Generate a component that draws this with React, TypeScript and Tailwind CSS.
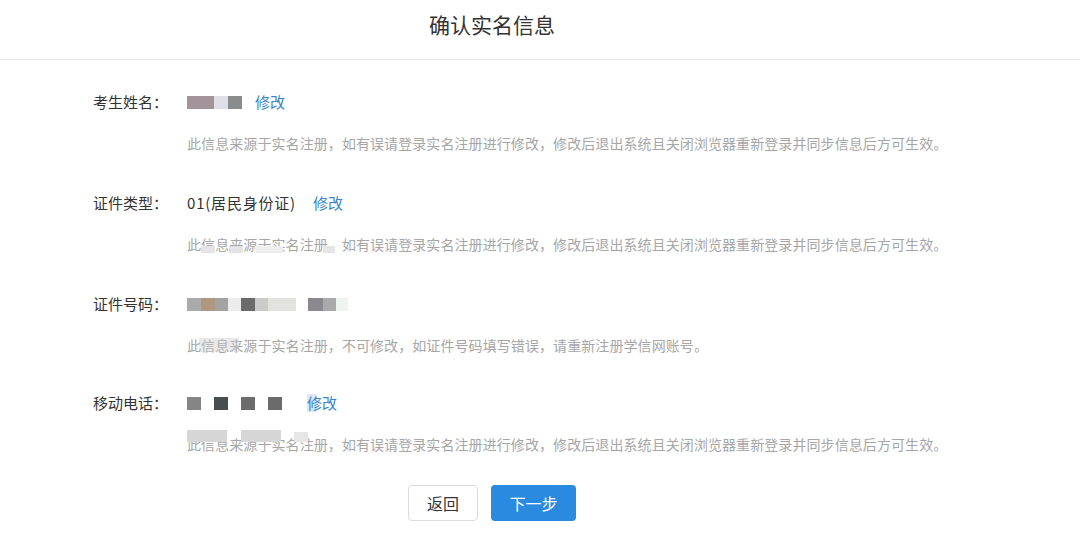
import React from "react";

const font = { fontFamily: '"Noto Sans CJK SC", "Noto Sans", sans-serif' };

const HINT_A =
  "此信息来源于实名注册，如有误请登录实名注册进行修改，修改后退出系统且关闭浏览器重新登录并同步信息后方可生效。";
const HINT_B = "此信息来源于实名注册，不可修改，如证件号码填写错误，请重新注册学信网账号。";

function Row({
  label,
  value,
  hint,
  blurs,
  mb = "mb-[38px]",
}: {
  label: string;
  value: React.ReactNode;
  hint: string;
  blurs?: React.ReactNode;
  mb?: string;
}) {
  return (
    <div className={`flex flex-col ${mb}`}>
      <div className="flex items-center h-6">
        <div className="w-[94px] shrink-0 text-[15px] text-[#333]">{label}</div>
        <div className="flex items-center text-[15px] text-[#333]">{value}</div>
      </div>
      <div className="relative mt-[19px] h-5 flex items-center pl-[94px]">
        <span className="text-[14px] text-[#a6a6a6] tracking-[0.08px]">{hint}</span>
        {blurs}
      </div>
    </div>
  );
}

function Block({ w, c }: { w: string; c: string }) {
  return <div className={`h-[13px] ${w} ${c}`} />;
}

export default function App() {
  return (
    <div className="w-[1080px] h-[540px] bg-white overflow-hidden" style={font}>
      <div className="h-[60px] border-b border-[#e6e6e6] flex items-center justify-center pr-[96px]">
        <span className="text-[21px] text-[#333] -mt-[10px]">确认实名信息</span>
      </div>
      <div className="pl-[93px] pt-[30px]">
        <Row
          label="考生姓名："
          value={
            <>
              <div className="flex items-center">
                <div className="h-[13px] w-[27px] bg-[#a3939b]" />
                <div className="h-[13px] w-[14px] bg-[#dfe0e7]" />
                <div className="h-[13px] w-[14px] bg-[#8a8b8d]" />
              </div>
              <span className="ml-[13px] text-[#3a84c9]">修改</span>
            </>
          }
          hint={HINT_A}
        />
        <Row
          label="证件类型："
          value={
            <>
              <span className="tracking-[0.8px]">01(居民身份证)</span>
              <span className="ml-[17px] text-[#3a84c9]">修改</span>
            </>
          }
          hint={HINT_A}
          blurs={
            <>
              <div className="absolute left-[108px] top-[12px] h-[7px] w-[14px] bg-[#e4e4e4]" />
              <div className="absolute left-[136px] top-[12px] h-[7px] w-[14px] bg-[#e4e4e4]" />
              <div className="absolute left-[162px] top-[12px] h-[7px] w-[28px] bg-[#eeeeee]" />
              <div className="absolute left-[230px] top-[12px] h-[7px] w-[12px] bg-[#e6e6e6]" />
            </>
          }
        />
        <Row
          label="证件号码："
          mb="mb-[36px]"
          value={
            <div className="flex items-center">
              <Block w="w-[14px]" c="bg-[#ababab]" />
              <Block w="w-[14px]" c="bg-[#b0977f]" />
              <Block w="w-[13px]" c="bg-[#a3a3a3]" />
              <Block w="w-[13px]" c="bg-[#ececec]" />
              <Block w="w-[14px]" c="bg-[#6b6b6b]" />
              <Block w="w-[13px]" c="bg-[#cbcbcb]" />
              <Block w="w-[28px]" c="bg-[#e2e2de]" />
              <div className="w-[12px]" />
              <Block w="w-[15px]" c="bg-[#8b898d]" />
              <Block w="w-[13px]" c="bg-[#aaaaaa]" />
              <Block w="w-[12px]" c="bg-[#f0f4f0]" />
            </div>
          }
          hint={HINT_B}
          blurs={
            <div className="absolute left-[106px] top-[3px] h-[14px] w-[40px] bg-[#c8c8c8] opacity-40" />
          }
        />
        <Row
          label="移动电话："
          value={
            <>
              <div className="flex items-center">
                <Block w="w-[14px]" c="bg-[#858585]" />
                <div className="w-[13px]" />
                <Block w="w-[14px]" c="bg-[#4a4d50]" />
                <div className="w-[13px]" />
                <Block w="w-[14px]" c="bg-[#6b6b6b]" />
                <div className="w-[13px]" />
                <Block w="w-[14px]" c="bg-[#6b6b6b]" />
              </div>
              <span className="relative ml-[25px] text-[#3a84c9]">
                <span className="absolute left-0 top-[2px] h-[18px] w-[10px] bg-[#c4d8ee] opacity-60" />
                <span className="relative">修改</span>
              </span>
            </>
          }
          hint={HINT_A}
          blurs={
            <>
              <div className="absolute left-[94px] top-[-4px] h-[12px] w-[40px] bg-[#d6d6d6]" />
              <div className="absolute left-[148px] top-[-4px] h-[12px] w-[40px] bg-[#d6d6d6]" />
              <div className="absolute left-[201px] top-[-2px] h-[10px] w-[14px] bg-[#e6e6e6]" />
            </>
          }
        />
      </div>
      <div className="flex justify-center pr-[96px] gap-[13px] -mt-[7px]">
        <button className="w-[70px] h-[36px] rounded-[4px] border border-[#dcdcdc] bg-white text-[16px] text-[#333]">
          返回
        </button>
        <button className="w-[85px] h-[36px] rounded-[4px] bg-[#2a8ae0] text-[16px] text-white">
          下一步
        </button>
      </div>
    </div>
  );
}
